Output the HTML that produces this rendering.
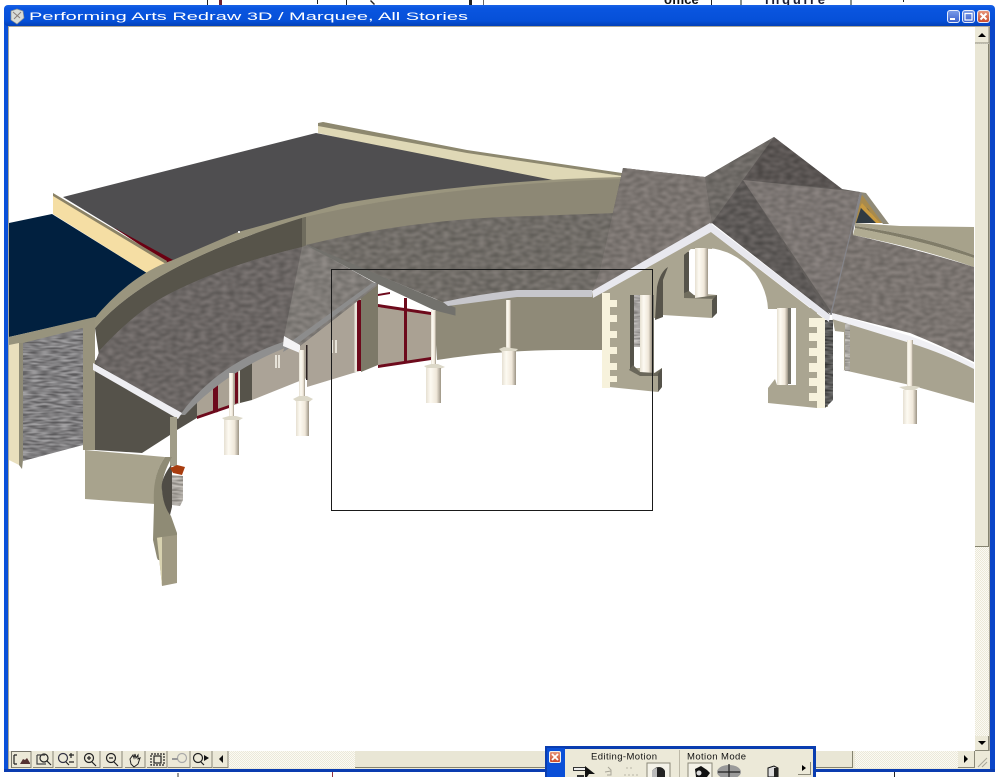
<!DOCTYPE html>
<html><head><meta charset="utf-8"><title>Performing Arts Redraw 3D</title>
<style>html,body{margin:0;padding:0;background:#fff;width:999px;height:777px;overflow:hidden}svg{display:block}text{font-family:"Liberation Sans",sans-serif}</style></head>
<body>
<svg xmlns="http://www.w3.org/2000/svg" width="999" height="777" viewBox="0 0 999 777">
<defs>
<linearGradient id="tb" x1="0" y1="0" x2="0" y2="1"><stop offset="0" stop-color="#1a62e6"/><stop offset=".15" stop-color="#0a55e0"/><stop offset=".75" stop-color="#0650d8"/><stop offset="1" stop-color="#0340b8"/></linearGradient>
<linearGradient id="col" x1="0" y1="0" x2="1" y2="0"><stop offset="0" stop-color="#e6e0d2"/><stop offset=".3" stop-color="#fdfaf2"/><stop offset=".7" stop-color="#f0e8da"/><stop offset="1" stop-color="#9c9485"/></linearGradient>
<linearGradient id="btn" x1="0" y1="0" x2="0" y2="1"><stop offset="0" stop-color="#7d9de8"/><stop offset="1" stop-color="#3a60cc"/></linearGradient>
<linearGradient id="cl" x1="0" y1="0" x2="0" y2="1"><stop offset="0" stop-color="#e89a80"/><stop offset="1" stop-color="#c8482a"/></linearGradient>
<filter id="sh" x="0" y="0" width="1" height="1" color-interpolation-filters="sRGB">
<feTurbulence type="fractalNoise" baseFrequency=".14 .24" numOctaves="1" seed="4" result="n"/>
<feColorMatrix in="n" values="1.6 0 0 0 -.3 1.5 0 0 0 -.28 1.5 0 0 0 -.28 0 0 0 0 .13" result="m"/>
<feComposite in="m" in2="SourceAlpha" operator="in" result="c"/>
<feMerge><feMergeNode in="SourceGraphic"/><feMergeNode in="c"/></feMerge>
</filter>
<filter id="br" x="0" y="0" width="1" height="1" color-interpolation-filters="sRGB">
<feTurbulence type="fractalNoise" baseFrequency=".1 .5" numOctaves="1" seed="7" result="n"/>
<feColorMatrix in="n" values="2 0 0 0 -.5 2 0 0 0 -.5 2 0 0 0 -.5 0 0 0 0 .28" result="m"/>
<feComposite in="m" in2="SourceAlpha" operator="in" result="c"/>
<feMerge><feMergeNode in="SourceGraphic"/><feMergeNode in="c"/></feMerge>
</filter>
<pattern id="dith" width="2" height="2" patternUnits="userSpaceOnUse"><rect width="2" height="2" fill="#fbfaf5"/><rect width="1" height="1" fill="#ece9d8"/><rect x="1" y="1" width="1" height="1" fill="#ece9d8"/></pattern>
</defs>

<!-- content behind window at top / bottom -->
<rect width="999" height="777" fill="#fff"/>
<g fill="#222">
<rect x="207" y="0" width="1" height="5"/><rect x="219" y="0" width="3" height="5" fill="#702030"/><rect x="317" y="0" width="1" height="4"/><rect x="346" y="0" width="1" height="5"/><path d="M371 0l4 4 -1 1 -4-4z"/><rect x="469" y="0" width="3" height="5"/><rect x="483" y="0" width="1" height="5" fill="#666"/>
<text x="664" y="4" font-size="13" font-weight="bold" fill="#111">office</text><rect x="711" y="0" width="1" height="5"/><rect x="740" y="0" width="2" height="5" fill="#88908c"/><rect x="850" y="0" width="2" height="5" fill="#88908c"/><text x="765" y="4" font-size="13" font-weight="bold" fill="#1c1c30" textLength="60">inquire</text><rect x="903" y="0" width="1" height="2"/>
<rect x="177" y="773" width="2" height="4" fill="#999"/><rect x="332" y="772" width="1" height="5" fill="#903040"/><rect x="894" y="772" width="1" height="5"/>
</g>

<!-- window frame -->
<path d="M4 12q0-7 7-7H988q7 0 7 7V772H4z" fill="#0a50d8"/>
<rect x="4" y="5" width="991" height="21" fill="url(#tb)" rx="4"/>
<rect x="990" y="20" width="5" height="752" fill="#0b46c8"/>
<rect x="4" y="769" width="991" height="3" fill="#0a3cb0"/>
<rect x="8" y="26" width="982" height="743" fill="#aca899"/>
<rect x="9" y="27" width="966" height="724" fill="#fff"/>
<!-- title -->
<path d="M11 11l6-2 6 2 1 7-7 6-6-4z" fill="#d9dcd8" stroke="#8a8f90" stroke-width=".7"/><path d="M13 12l7 6M21 12l-7 7" stroke="#8a7f7a" stroke-width="1"/>
<text x="29" y="20" font-size="11" fill="#fff" textLength="439" lengthAdjust="spacingAndGlyphs">Performing Arts Redraw 3D / Marquee, All Stories</text>
<!-- window buttons -->
<g stroke="#e8eefc" stroke-width="1">
<rect x="947.500" y="10.500" width="12" height="12" rx="2.500" fill="url(#btn)"/>
<rect x="962.500" y="10.500" width="12" height="12" rx="2.500" fill="url(#btn)"/>
<rect x="977.500" y="10.500" width="12" height="12" rx="2.500" fill="url(#cl)"/>
</g>
<rect x="950" y="18" width="5" height="2" fill="#fff"/>
<rect x="965" y="13.500" width="7" height="6.500" fill="none" stroke="#fff" stroke-width="1.200"/>
<path d="M980.500 13.500l6 6M986.500 13.500l-6 6" stroke="#fff" stroke-width="2"/>

<!-- vertical scrollbar -->
<rect x="975" y="27" width="14" height="724" fill="url(#dith)"/>
<rect x="975" y="27" width="14" height="16" fill="#ece9d8"/><path d="M975 43h14V27" fill="none" stroke="#8a8878"/>
<path d="M978 37l4-4 4 4z" fill="#000"/>
<rect x="975" y="44" width="14" height="502" fill="#e9e6d5"/><path d="M975 546.500h14M988.500 44v502" stroke="#85836f"/>
<rect x="975" y="736" width="14" height="15" fill="#ece9d8"/><path d="M975 750.500h14M988.500 736v15" stroke="#8a8878"/>
<path d="M978 741l4 4 4-4z" fill="#000"/>

<!-- BUILDING -->
<!-- navy roof -->
<path d="M9 223L52 214L147 273L97 317L9 337z" fill="#01203f"/>
<!-- back cream wall -->
<path d="M318 124L323 122L467 152L622 176V186H553L318 133z" fill="#dfd8b6"/>
<path d="M318 123L323 122L467 150L622 173V176L467 153L318 126z" fill="#8d886f"/>
<!-- dark flat roof -->
<path d="M63 197L316 133L553 180L553 186L470 192Q390 200 300 222L238 238L173 264z" fill="#4f4e50"/>
<path d="M113 227L173 260L167 263z" fill="#6b0012"/>
<!-- cream fascia -->
<path d="M53 195L53 214L147 273L167 263z" fill="#f5dea4"/>
<path d="M53 193L167 261L166 264L53 196z" fill="#8b8266"/>
<!-- wall right of corner, inner wall -->
<path d="M302 217Q450 184 624 178L612 216L400 228L302 250z" fill="#8d8875"/>
<path d="M95 328Q150 264 302 218V252L100 362z" fill="#57544a"/>
<rect x="302" y="217" width="4" height="30" fill="#6f6c5e"/>
<!-- parapet top band -->
<path d="M93 320Q130 275 173 260L238 232L340 204Q480 180 622 177V179Q450 184 305 217Q150 264 95 328z" fill="#9a957e"/>
<rect x="238" y="231" width="2" height="2" fill="#eee"/>

<!-- left end wall -->
<path d="M9 337L95 317V328L9 346z" fill="#97937d"/>
<path d="M9 345L19 343V465L9 460z" fill="#e9dfbd"/>
<path d="M19 343H23V460L22 469L19 465z" fill="#8f8b76"/>
<path d="M23 343L83 328V445L23 461z" fill="#807e82" filter="url(#br)"/>
<path d="M83 325L95 320V450H83z" fill="#98937d"/>

<!-- dark wall under left roof -->
<path d="M95 360L180 405L200 392V416L177 430L170 435L142 453L95 450z" fill="#55524a"/>

<!-- door walls -->
<path d="M197 393L240 362V403L197 418z" fill="#aaa294"/>
<path d="M213 380L218 377V412L213 413z" fill="#6d0a1c"/>
<path d="M235 366L238 364V403L235 404z" fill="#6d0a1c"/>
<rect x="238.500" y="364" width="1.500" height="39" fill="#e8e4da"/>
<path d="M197 416L232 404V407L197 419z" fill="#6d0a1c"/>
<path d="M240 360L252 352V400L240 403z" fill="#56534a"/>
<path d="M252 352L307 332V378L252 400z" fill="#aba397"/>
<path d="M275 355h2v13h-2zM278 355h2v13h-2z" fill="#e6e2d8"/>
<path d="M307 336L363 294V370L307 387z" fill="#aba397"/>
<path d="M331 340h2v13h-2zM335 340h2v13h-2z" fill="#e6e2d8"/>
<rect x="354.500" y="300" width="2.500" height="72" fill="#e8e4da"/>
<rect x="357" y="300" width="4" height="71" fill="#6d0a1c"/>
<rect x="306" y="345" width="1.500" height="35" fill="#2a2020"/>
<path d="M361 296L378 282V365L361 372z" fill="#7d7968"/>

<!-- glass bay -->
<path d="M378 307L431 314V358L378 365z" fill="#aaa193"/>
<path d="M378 304L431 312V315L378 307z" fill="#6d0a1c"/>
<path d="M378 294L390 292V294L378 296z" fill="#6d0a1c"/>
<rect x="404" y="298" width="3" height="64" fill="#6d0a1c"/>
<path d="M378 365L431 357V360L378 368z" fill="#6d0a1c"/>

<!-- main long wall -->
<path d="M433 300L592 288H602V350L563 350Q500 350 437 360z" fill="#8f8a78"/>

<!-- left curved roof + gable -->
<path d="M95 363L100 350Q135 312 167 295Q225 265 302 247L307 245L378 285L300 346L283 342Q220 365 180 415z" fill="#696562"/>
<path d="M95 363L100 350Q135 312 167 295Q225 265 302 247L283 342Q220 365 180 415z" fill="#696562" filter="url(#sh)"/>
<!-- middle curved roof -->
<path d="M306 245Q400 222 500 217L618 213L602 290L517 293L443 302z" fill="#6f6b66" filter="url(#sh)"/>
<path d="M302 247L307 245L378 285L300 346L283 342z" fill="#807c78" filter="url(#sh)"/>
<!-- gray edge bands -->
<path d="M378 283L300 342L283 352L285 346L372 283z" fill="#8c8c8c"/>
<path d="M283 342Q215 365 180 415L185 415Q225 372 285 348z" fill="#8f8f8f"/>
<path d="M307 245L455 308V315L435 310L377 283z" fill="#72716c" stroke="#72716c" stroke-width="1"/>
<path d="M443 302L448 306L517 297H592V290H517Q480 294 443 302z" fill="#c7c7cc"/>

<!-- fascia white left -->
<path d="M93 363V370L178 419L182 413z" fill="#eeeef2"/>
<path d="M283 346L300 353V345L284 336z" fill="#f4f4f6"/>

<!-- back pier -->
<path d="M655 265L690 240H712V249L695 248V293L717 295V313L712 318L663 315V276z" fill="#aaa591"/>
<rect x="684" y="252" width="5" height="41" fill="#55534a"/>
<rect x="689" y="249" width="6" height="46" fill="#fff"/>
<rect x="695" y="248" width="13" height="50" fill="url(#col)"/>
<path d="M684 293L689 291L695 296V298L717 295V299L684 298z" fill="#706d5e"/>
<path d="M712 300L717 295V313L712 318z" fill="#55534a"/>

<!-- arch face -->
<path d="M711 232L828 322V407H810V309H768Q767 290 755 273Q735 250 708 248L690 248L700 232z" fill="#aaa591"/>

<!-- right pier -->
<path d="M796 308H817V408L768 403V388L775 379L777 385H796z" fill="#aaa591"/>
<rect x="777" y="308" width="11" height="77" fill="url(#col)"/>
<rect x="788" y="308" width="3" height="76" fill="#77756a"/>
<rect x="791" y="308" width="5" height="74" fill="#fff"/>
<g fill="#f7f2dc">
<rect x="817" y="318" width="8" height="90"/>
<rect x="809" y="318" width="9" height="9"/><rect x="809" y="333" width="9" height="8"/><rect x="809" y="348" width="9" height="8"/><rect x="809" y="363" width="9" height="9"/><rect x="809" y="378" width="9" height="8"/><rect x="809" y="393" width="9" height="8"/>
</g>
<path d="M825 320H833V400L825 408z" fill="#4a4a48" filter="url(#br)"/>

<!-- left pier -->
<path d="M602 293L655 262L658 283V318H654V373L662 368V387L658 392L609 387z" fill="#aaa591"/>
<path d="M640 272L700 236L690 250L668 268L658 284z" fill="#aaa591"/>
<path d="M668 267Q660 272 657 287L655 320L663 317V280z" fill="#57544a"/>
<rect x="630" y="295" width="4" height="75" fill="#55534a"/>
<rect x="634" y="295" width="6" height="73" fill="#fff"/>
<rect x="634" y="295" width="6" height="52" fill="#b5b1ad" filter="url(#br)"/>
<rect x="640" y="295" width="12" height="78" fill="url(#col)"/>
<rect x="652" y="295" width="2" height="78" fill="#77756a"/>
<path d="M629 370L633 365L640 372L655 373L662 368L658 376H640z" fill="#6a675a"/>
<path d="M658 374L662 368V387L658 392z" fill="#55534a"/>
<g fill="#f7f2dc">
<rect x="602" y="293" width="8" height="95"/>
<rect x="602" y="300" width="15" height="7"/><rect x="602" y="315" width="15" height="7"/><rect x="602" y="331" width="15" height="7"/><rect x="602" y="347" width="15" height="7"/><rect x="602" y="363" width="15" height="7"/><rect x="602" y="376" width="15" height="6"/>
</g>

<!-- gable roof -->
<path d="M623 168L705 177L774 137L842 189L860 192L832 315L712 223L592 292L600 270z" fill="#625e5b"/>
<path d="M623 168L705 177L712 223L592 292L600 270z" fill="#7a7570" filter="url(#sh)"/>
<path d="M705 177L774 137L743 180L712 223z" fill="#6d6965" filter="url(#sh)"/>
<path d="M774 137L842 189L743 180z" fill="#54504e" filter="url(#sh)"/>
<path d="M743 180L830 315L712 223z" fill="#595553" filter="url(#sh)"/>
<!-- dormer back -->
<path d="M860 192L887 223H855z" fill="#a88a4c"/>
<path d="M860 192L866 193L889 224L883 224z" fill="#8f8a78"/>
<path d="M862 205L868 209L878 223H856z" fill="#2f3a42"/>
<path d="M862 203L880 223H876L860 207z" fill="#c89a40"/>
<path d="M743 180L860 192L832 313z" fill="#7b7672" filter="url(#sh)"/>
<path d="M860 192L862 194L834 314L830 315z" fill="#85858a"/>

<!-- right curved top walls -->
<path d="M855 223L900 226L974 227V255Q920 235 855 226z" fill="#a7a28b"/>
<path d="M855 226Q920 235 974 255V258Q920 240 855 228z" fill="#807c68"/>
<path d="M855 228Q920 240 974 258V267Q920 248 853 235z" fill="#b0ab92"/>
<!-- right wall -->
<path d="M832 316H843L910 340L974 365V403L910 385L843 370V332L835 331z" fill="#a8a390"/>
<rect x="845" y="323" width="5" height="48" fill="#b9b5ae" filter="url(#br)"/>
<path d="M833 332H844V370H833z" fill="#fff"/>
<!-- right curved roof -->
<path d="M853 235Q920 250 974 267V362Q940 345 910 333L832 313L853 225z" fill="#7a7570" filter="url(#sh)"/>
<path d="M855 228Q920 240 974 258V267Q920 248 853 235z" fill="#b0ab92"/>
<!-- fascia right -->
<path d="M832 313L910 336Q945 348 974 364V369Q945 354 910 343L832 319z" fill="#f0f0f4"/>

<!-- gable white fascia -->
<path d="M592 291L710 223L830 315L829 322L711 232L593 298z" fill="#e8e8ee"/>

<!-- columns -->
<g>
<rect x="229" y="373" width="5" height="44" fill="url(#col)"/>
<path d="M222 418L229 416H236L243 418L238 421H226z" fill="#dcd8c8"/><rect x="224" y="420" width="15" height="35" fill="url(#col)"/>
<rect x="299" y="350" width="6" height="47" fill="url(#col)"/>
<path d="M293 399L299 396H307L313 399L309 402H297z" fill="#dcd8c8"/><rect x="296" y="401" width="13" height="35" fill="url(#col)"/>
<rect x="431" y="310" width="5" height="55" fill="url(#col)"/>
<path d="M424 366L431 364H438L445 367L440 369H428z" fill="#dcd8c8"/><rect x="426" y="368" width="15" height="35" fill="url(#col)"/>
<rect x="506" y="300" width="5" height="50" fill="url(#col)"/>
<path d="M499 349L504 347L518 349L515 352H502z" fill="#dcd8c8"/><rect x="502" y="351" width="14" height="34" fill="url(#col)"/>
<rect x="907" y="340" width="6" height="48" fill="url(#col)"/>
<path d="M899 387L907 386H915L920 387L915 390H905z" fill="#dcd8c8"/><rect x="903" y="390" width="14" height="34" fill="url(#col)"/>
</g>

<!-- low curved wall -->
<rect x="170" y="417" width="7" height="49" fill="#a09c88"/>
<path d="M85 450L165 457Q152 475 155 504L85 499z" fill="#a8a38d"/>
<path d="M165 457L172 457Q162 475 162 488Q163 505 171 516L177 533L177 560L158 560L157 558L153 540L154 505Q152 475 165 457z" fill="#8f8b75"/>
<path d="M171 465Q160 480 162 490Q163 505 170 515L172 507V470z" fill="#4f4c45"/>
<path d="M172 475L183 476V500L180 506L172 505z" fill="#bab5ac" filter="url(#br)"/>
<path d="M170 468L177 465L185 467L182 475L173 473z" fill="#a83c0e"/>
<path d="M157 537L162 537L177 535V583L162 586z" fill="#a09a83"/>
<path d="M157 538L162 537V586z" fill="#d8d2b0"/>

<!-- marquee -->
<rect x="331.500" y="269.500" width="321" height="241" fill="none" stroke="#1a1a1a" stroke-width="1"/>

<!-- bottom toolbar -->
<rect x="9" y="751" width="966" height="18" fill="#ece9d8"/>
<rect x="228" y="751" width="132" height="17" fill="url(#dith)"/>
<rect x="855" y="751" width="105" height="17" fill="url(#dith)"/>
<rect x="355" y="751" width="498" height="17" fill="#e9e6d5"/><path d="M355 767.500h498M852.500 751v17" stroke="#85836f"/>
<rect x="958" y="751" width="17" height="17" fill="#ece9d8"/><path d="M958 767.500h17M974.500 751v17" stroke="#8a8878"/>
<path d="M964 755l4 4-4 4z" fill="#000"/>
<rect x="975" y="751" width="15" height="18" fill="#ece9d8"/><path d="M978 767l9-9M982 767l5-5" stroke="#a8a598"/>
<g fill="none" stroke="#8a8878">
<path d="M11 767.500H31V751M33 767.500H53V751M55 767.500H77V751M80 767.500H100V751M103 767.500H122V751M125 767.500H145V751M147 767.500H167V751M168 767.500H190V751M192 767.500H212V751M213 767.500H228V751"/>
</g>
<path d="M11 751h20v1H12v16h-1z" fill="#77756a"/>
<!-- toolbar icons -->
<g fill="none" stroke="#222" stroke-width="1.200">
<path d="M14 755v9M14 755h3M14 764h3" />
<circle cx="44" cy="758" r="4"/><path d="M47 761l4 4"/><path d="M37 755h8M37 755v9h9" stroke="#444"/>
<circle cx="63" cy="758" r="4.500" stroke="#334"/><path d="M66 762l3 3"/>
<circle cx="89" cy="758" r="4.500"/><path d="M92 762l4 4M87 758h4M89 756v4"/>
<circle cx="111" cy="758" r="4.500"/><path d="M114 762l4 4M109 758h4"/>
<path d="M130 759l3-4 1 3 1-4 1 4 2-3 0 4 2-1-2 6-4 3-3-3z" stroke-width="1"/>
<rect x="151" y="754" width="13" height="11" stroke-dasharray="2 1"/><rect x="154" y="756" width="7" height="7"/>
<circle cx="182" cy="758" r="4.500" stroke="#aaa"/><path d="M172 759h6" stroke="#999" stroke-width="2"/>
<circle cx="198" cy="758" r="4.500"/><path d="M201 762l3 3"/>
</g>
<path d="M69 755h5M71 753v5M69 762h5" stroke="#222" stroke-width="1.200"/>
<path d="M20 764l3-5 2 1 2-2 3 5v1z" fill="#533"/>
<path d="M204 755l5 3-5 3z" fill="#111"/>
<path d="M223 755l-4 4 4 4z" fill="#111"/>

<!-- floating palette -->
<rect x="545" y="746" width="271" height="31" fill="#0a3db0"/>
<rect x="547" y="748" width="18" height="29" fill="#0a4fd8"/>
<rect x="565" y="749" width="248" height="28" fill="#ece9d8"/>
<rect x="549.500" y="751.500" width="11" height="11" rx="1.500" fill="url(#cl)" stroke="#f0f0f0"/>
<path d="M552 754l6 6M558 754l-6 6" stroke="#fff" stroke-width="1.800"/>
<text x="591" y="759.500" font-size="9.500" fill="#111" textLength="66">Editing-Motion</text>
<text x="687" y="759.500" font-size="9.500" fill="#111" textLength="59">Motion Mode</text>
<rect x="679" y="750" width="1" height="27" fill="#bdb9a8"/>
<!-- palette buttons -->
<rect x="573" y="767" width="13" height="4" fill="#333"/><rect x="574" y="768" width="11" height="2" fill="#eee"/><rect x="577" y="775" width="7" height="2" fill="#333"/>
<path d="M585 766l0 11h2l2-3h6z" fill="#111"/>
<path d="M608 767l3 3v5h-4M605 772l6-1" stroke="#a8a598" fill="none"/>
<path d="M626 768h8M624 775h14" stroke="#b8b5a6" stroke-dasharray="2 2"/>
<path d="M647 777v-14h23v14" fill="#f4f2e8" stroke="#8a8878"/>
<path d="M652 777v-6q3-4 7-4t6 4v6z" fill="#222"/><path d="M652 777v-6q2-3 5-3v9z" fill="#bbb"/>
<path d="M688 777v-14h24v14" fill="#f4f2e8" stroke="#8a8878"/>
<path d="M695 769l6-3 6 4 3 3-3 4h-11z" fill="#111"/><circle cx="699" cy="773" r="2.500" fill="#ddd"/>
<ellipse cx="729" cy="772" rx="12" ry="7" fill="#9a9a9a"/><path d="M729 764v13M718 772h22" stroke="#222" stroke-width="1.200"/>
<path d="M768 768l6-2 4 2v9h-10z" fill="#ddd" stroke="#111"/><path d="M774 768h4v9h-4z" fill="#222"/>
<rect x="798" y="762" width="13" height="12" fill="#ece9d8"/><path d="M798 774.500h13M810.500 762v13" stroke="#8a8878"/>
<path d="M802 765l4 3-4 3z" fill="#000"/>
</svg>
</body></html>
